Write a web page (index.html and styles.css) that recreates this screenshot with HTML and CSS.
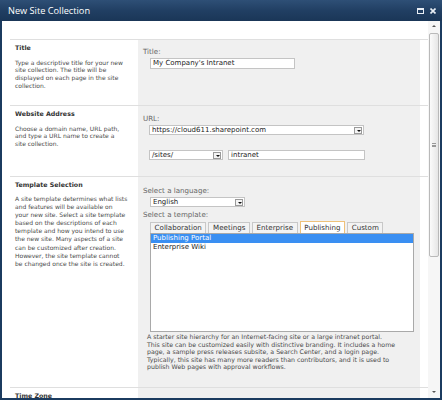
FILE: index.html
```html
<!DOCTYPE html>
<html>
<head>
<meta charset="utf-8">
<link rel="stylesheet" href="styles.css">
</head>
<body>
<div class="window">
  <div class="titlebar">
    <span class="title">New Site Collection</span>
    <span class="ctrls">
      <svg class="ico" width="7" height="6" viewBox="0 0 7 6"><rect x="0.5" y="0.5" width="6" height="5" fill="none" stroke="#e8eef5" stroke-width="1"/><rect x="0" y="0" width="7" height="2" fill="#e8eef5"/></svg>
      <svg class="ico" width="6" height="6" viewBox="0 0 6 6"><path d="M0.5 0.5 L5.5 5.5 M5.5 0.5 L0.5 5.5" stroke="#e8eef5" stroke-width="1.6"/></svg>
    </span>
  </div>
  <div class="frame">
    <div class="main">
      <div class="section s1">
        <div class="left">
          <div class="head">Title</div>
          <div class="desc">Type a descriptive title for your new<br>site collection. The title will be<br>displayed on each page in the site<br>collection.</div>
        </div>
        <div class="right">
          <div class="label">Title:</div>
          <div class="input title-input">My Company's Intranet</div>
        </div>
      </div>
      <div class="section s2">
        <div class="left">
          <div class="head">Website Address</div>
          <div class="desc">Choose a domain name, URL path,<br>and type a URL name to create a<br>site collection.</div>
        </div>
        <div class="right">
          <div class="label">URL:</div>
          <div class="select url-select"><span class="val">https://cloud611.sharepoint.com</span><span class="drop"></span></div>
          <div class="path-row">
            <div class="select path-select"><span class="val">/sites/</span><span class="drop"></span></div>
            <div class="input path-input">intranet</div>
          </div>
        </div>
      </div>
      <div class="section s3">
        <div class="left">
          <div class="head">Template Selection</div>
          <div class="desc">A site template determines what lists<br>and features will be available on<br>your new site. Select a site template<br>based on the descriptions of each<br>template and how you intend to use<br>the new site. Many aspects of a site<br>can be customized after creation.<br>However, the site template cannot<br>be changed once the site is created.</div>
        </div>
        <div class="right">
          <div class="label">Select a language:</div>
          <div class="select lang-select"><span class="val">English</span><span class="drop"></span></div>
          <div class="label label-tpl">Select a template:</div>
          <div class="tabs">
            <span class="tab">Collaboration</span>
            <span class="tab">Meetings</span>
            <span class="tab">Enterprise</span>
            <span class="tab active">Publishing</span>
            <span class="tab">Custom</span>
          </div>
          <div class="listbox">
            <div class="opt selected">Publishing Portal</div>
            <div class="opt">Enterprise Wiki</div>
          </div>
          <div class="tpl-desc">A starter site hierarchy for an Internet-facing site or a large intranet portal.<br>This site can be customized easily with distinctive branding. It includes a home<br>page, a sample press releases subsite, a Search Center, and a login page.<br>Typically, this site has many more readers than contributors, and it is used to<br>publish Web pages with approval workflows.</div>
        </div>
      </div>
      <div class="section s4">
        <div class="left">
          <div class="head">Time Zone</div>
        </div>
        <div class="right"></div>
      </div>
    </div>
    <div class="scrollbar">
      <span class="arr up"></span>
      <div class="thumb"><span class="grip"></span></div>
      <span class="arr down"></span>
    </div>
  </div>
</div>
</body>
</html>
```
FILE: styles.css
```css
* { box-sizing: border-box; margin: 0; padding: 0; }
html, body { margin: 0; width: 442px; height: 400px; overflow: hidden; background: #fff; }
body { font-family: "DejaVu Sans", Verdana, sans-serif; }

.window { width: 442px; height: 400px; display: flex; flex-direction: column; }

.titlebar {
  height: 21px;
  flex: none;
  display: flex;
  align-items: center;
  padding: 0 6px 0 8px;
  background: linear-gradient(to bottom, #2e4f76 0%, #213f63 50%, #1a3657 100%);
}
.title { color: #fff; font-family: "Open Sans", "DejaVu Sans", sans-serif; font-size: 9.2px; }
.ctrls { margin-left: auto; display: flex; align-items: center; gap: 6px; }
.ico { display: block; }

.frame {
  flex: 1;
  min-height: 0;
  display: flex;
  border: 2px solid #1b3b5f;
  border-top: 0;
}
.main { flex: 1; min-width: 0; padding: 18px 0 0 8px; overflow: hidden; }

.section {
  display: grid;
  grid-template-columns: 128px 282px;
  border-top: 1px solid #dfdfdf;
}
.s1 { height: 66px; }
.s2 { height: 71px; }
.s3 { height: 211px; }
.s4 { height: 40px; }

.left { padding: 4px 2px 0 5px; }
.head { font-weight: bold; font-size: 6.3px; line-height: 8px; color: #333; }
.desc { margin-top: 6.5px; font-size: 6px; line-height: 7.9px; color: #4a4a4a; white-space: nowrap; }
.s3 .desc { margin-top: 6px; line-height: 8.1px; }

.right { background: #f0f0f0; padding-left: 5px; font-size: 7.1px; }
.s1 .right { padding-top: 8px; }
.s2 .right { padding-top: 9px; }
.s3 .right { padding-top: 10px; }

.label { line-height: 8px; color: #666; }

.input, .select {
  height: 10px;
  background: #fff;
  border: 1px solid #c4c4c4;
  color: #222;
  line-height: 8px;
  padding-left: 2px;
  font-size: 7px;
  white-space: nowrap;
}
.title-input { margin: 2px 0 0 7px; width: 145px; height: 11px; line-height: 9px; }

.select { display: flex; align-items: center; padding-right: 1px; }
.select .val { flex: 1; }
.drop {
  width: 8px; height: 7px;
  border: 1px solid #9a9a9a;
  background: #f4f4f4;
  position: relative;
  flex: none;
}
.drop::after {
  content: "";
  position: absolute;
  left: 1.5px; top: 2px;
  border-left: 2px solid transparent;
  border-right: 2px solid transparent;
  border-top: 2px solid #111;
}
.url-select { margin: 2px 0 0 6px; width: 215px; }
.path-row { display: flex; gap: 5px; margin: 15px 0 0 6px; }
.path-select { width: 74px; }
.path-input { width: 137px; }

.lang-select { margin: 2px 0 0 7px; width: 95px; }
.label-tpl { margin-top: 4px; }

.tabs { display: flex; gap: 2px; margin: 3px 0 0 7px; height: 11px; align-items: flex-end; position: relative; z-index: 1; }
.tab {
  height: 11px;
  padding: 0 3.6px;
  border: 1px solid #c8c8c8;
  border-bottom: 0;
  background: #f3f3f3;
  color: #333;
  line-height: 10px;
  font-size: 7.1px;
  white-space: nowrap;
}
.tab.active { height: 12px; background: #fff; border-color: #efc27a; line-height: 11px; }

.listbox {
  margin-left: 7px;
  width: 264px;
  height: 99px;
  background: #fff;
  border: 1px solid #a9a9a9;
  font-size: 7px;
}
.opt { height: 8.5px; line-height: 8.5px; padding-left: 2px; color: #222; }
.opt.selected { background: #3a8ff2; color: #fff; }

.tpl-desc { margin: 1px 0 0 4px; font-size: 6.25px; line-height: 7.5px; color: #4a4a4a; white-space: nowrap; }

.scrollbar {
  width: 12px;
  flex: none;
  background: #f6f6f6;
  display: flex;
  flex-direction: column;
  align-items: center;
}
.arr { width: 10px; height: 10px; flex: none; position: relative; }
.arr::after {
  content: "";
  position: absolute;
  left: 3px;
  border-left: 2px solid transparent;
  border-right: 2px solid transparent;
}
.arr.up::after { top: 4px; border-bottom: 2px solid #555; }
.arr.down { margin-top: auto; margin-bottom: 1px; }
.arr.down::after { top: 4px; border-top: 2px solid #555; }
.thumb {
  margin-top: 2px;
  width: 10px;
  height: 224px;
  border: 1px solid #b9b9b9;
  border-radius: 2px;
  background: linear-gradient(to right, #fbfbfb, #e6e6e6);
  display: flex;
  align-items: center;
  justify-content: center;
}
.grip { width: 4px; height: 4px; border-top: 1px solid #999; border-bottom: 1px solid #999; position: relative; }
.grip::after { content: ""; position: absolute; left: 0; right: 0; top: 0.5px; border-top: 1px solid #999; }
```
